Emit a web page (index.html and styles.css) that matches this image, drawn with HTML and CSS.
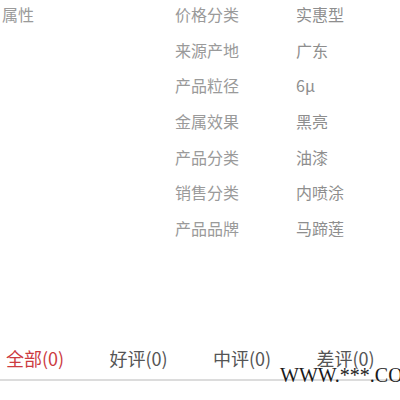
FILE: index.html
```html
<!DOCTYPE html>
<html lang="zh">
<head>
<meta charset="utf-8">
<link rel="stylesheet" href="styles.css">
</head>
<body>
<div class="page">
  <div class="attrs">
    <div class="title">属性</div><div class="label">价格分类</div><div class="value">实惠型</div>
    <div></div><div class="label">来源产地</div><div class="value">广东</div>
    <div></div><div class="label">产品粒径</div><div class="value">6μ</div>
    <div></div><div class="label">金属效果</div><div class="value">黑亮</div>
    <div></div><div class="label">产品分类</div><div class="value">油漆</div>
    <div></div><div class="label">销售分类</div><div class="value">内喷涂</div>
    <div></div><div class="label">产品品牌</div><div class="value">马蹄莲</div>
  </div>
  <div class="tabs">
    <div class="tab active">全部(0)</div>
    <div class="tab">好评(0)</div>
    <div class="tab">中评(0)</div>
    <div class="tab">差评(0)</div>
  </div>
  <div class="watermark">WWW.***.CO</div>
</div>
</body>
</html>
```
FILE: styles.css
```css
html, body {
  margin: 0;
  padding: 0;
  background: #fff;
}
body {
  font-family: "Noto Sans CJK SC", "Microsoft YaHei", sans-serif;
  width: 400px;
  height: 400px;
  overflow: hidden;
}
.page {
  position: relative;
  height: 400px;
}
.attrs {
  display: grid;
  grid-template-columns: 175px 121px 1fr;
  grid-auto-rows: 35.7px;
  margin-top: -3px;
  font-size: 16px;
  line-height: 35.7px;
  color: #9a9a9a;
}
.title {
  padding-left: 2px;
}
.value {
  color: #8e8e8e;
}
.tabs {
  display: grid;
  grid-template-columns: 103.5px 103.5px 103.5px 1fr;
  padding-left: 6px;
  margin-top: 90px;
  height: 42px;
  border-bottom: 2px solid #dcdcdc;
  font-size: 18px;
  line-height: 42px;
  color: #555;
}
.tab.active {
  color: #cc3b3f;
}
.watermark {
  position: absolute;
  left: 280px;
  top: 368px;
  font-family: "Liberation Serif", "Times New Roman", serif;
  font-size: 20px;
  line-height: 20px;
  color: #1a1a1a;
  white-space: nowrap;
}
```
